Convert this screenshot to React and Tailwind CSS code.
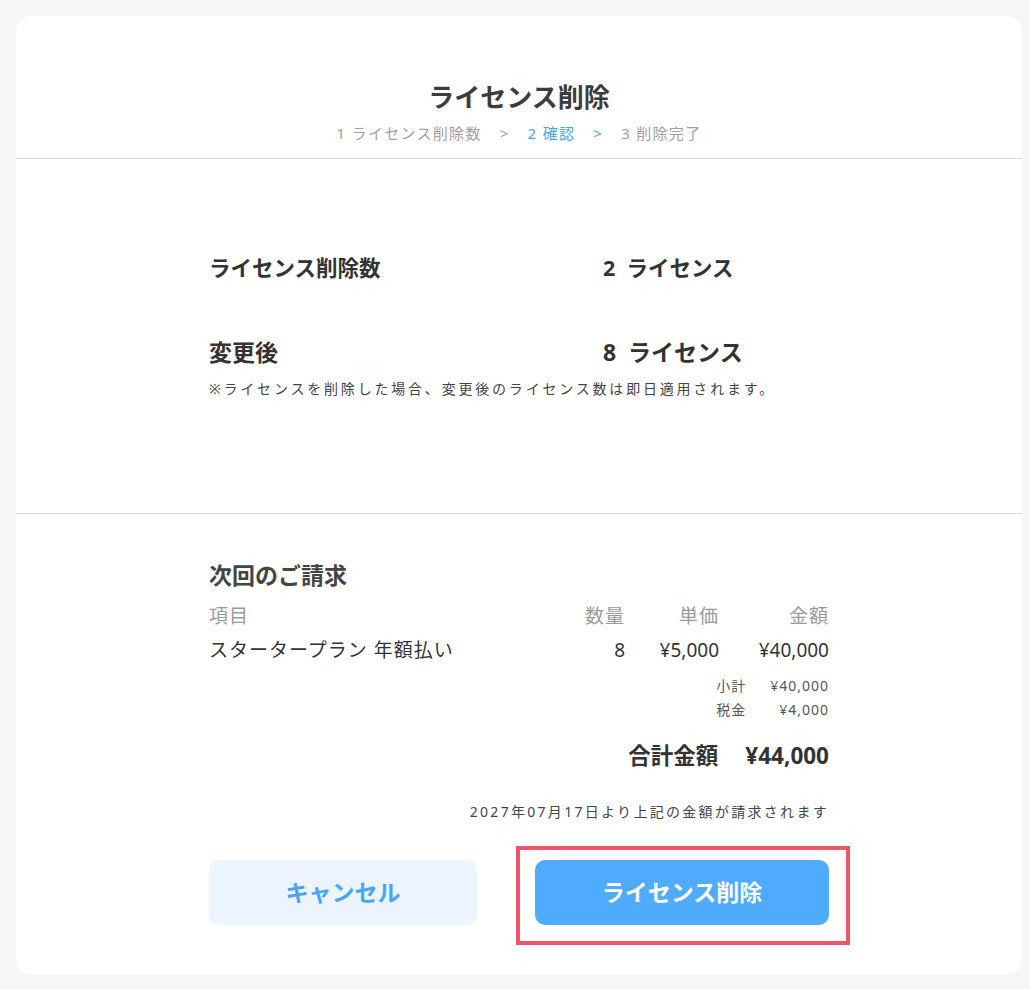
import React from "react";

const font = { fontFamily: '"Noto Sans", "Noto Sans CJK JP", sans-serif' };

export default function App() {
  return (
    <div className="min-h-[989px] bg-[#f7f6f4] pt-4 pr-2 pb-3 pl-4" style={font}>
      <div className="rounded-2xl bg-white">
        {/* header */}
        <div className="flex flex-col items-center border-b border-[#dcdcdc] pt-[63px] pb-[15px]">
          <h1 className="text-[26px] font-bold leading-[36px] text-[#3c3c3c]">ライセンス削除</h1>
          <div className="mt-2 flex items-center gap-[18px] text-[15px] leading-5 tracking-[1.3px] text-[#a0a0a0]">
            <span>1 ライセンス削除数</span>
            <span>&gt;</span>
            <span className="text-[#4aa0f8]">2 確認</span>
            <span className="text-[#4aa0f8]">&gt;</span>
            <span>3 削除完了</span>
          </div>
        </div>

        {/* license summary */}
        <div className="border-b border-[#dcdcdc] pt-[94px] pb-[114px]">
          <div className="mx-auto w-[620px] text-[#333]">
            <div className="flex text-[21.5px] font-bold leading-[30px]">
              <span className="w-[394px]">ライセンス削除数</span>
              <span>2&nbsp;&nbsp;ライセンス</span>
            </div>
            <div className="mt-[54px] flex text-[23px] font-bold leading-[30px]">
              <span className="w-[394px]">変更後</span>
              <span>8&nbsp;&nbsp;ライセンス</span>
            </div>
            <p className="mt-3 text-[14px] leading-5 tracking-[2.8px] text-[#444]">
              ※ライセンスを削除した場合、変更後のライセンス数は即日適用されます。
            </p>
          </div>
        </div>

        {/* billing */}
        <div className="pt-[46px] pb-[50px]">
          <div className="mx-auto w-[620px]">
            <h2 className="text-[23px] font-bold leading-[30px] text-[#444]">次回のご請求</h2>
            <div className="mt-[13px] grid grid-cols-[1fr_60px_94px_110px] text-[19px] leading-[26px] tracking-[1px] text-[#9a9a9a]">
              <span>項目</span>
              <span className="text-right">数量</span>
              <span className="text-right">単価</span>
              <span className="text-right">金額</span>
            </div>
            <div className="mt-2 grid grid-cols-[1fr_60px_94px_110px] text-[19px] leading-[26px] text-[#333]">
              <span className="tracking-[1px]">スタータープラン 年額払い</span>
              <span className="text-right">8</span>
              <span className="text-right">¥5,000</span>
              <span className="text-right">¥40,000</span>
            </div>
            <div className="mt-[13px] flex justify-end">
              <div className="grid grid-cols-[auto_auto] gap-x-6 gap-y-1 text-[14px] leading-5 tracking-[1px] text-[#555]">
                <span>小計</span>
                <span className="text-right">¥40,000</span>
                <span>税金</span>
                <span className="text-right">¥4,000</span>
              </div>
            </div>
            <div className="mt-[21px] flex justify-end gap-[27px] text-[22.5px] font-bold leading-[30px] text-[#333]">
              <span>合計金額</span>
              <span>¥44,000</span>
            </div>
            <p className="mt-[31px] text-right text-[14px] leading-5 tracking-[2.3px] text-[#444]">
              2027年07月17日より上記の金額が請求されます
            </p>
            <div className="mt-[38px] flex justify-between">
              <button className="h-[65px] w-[268px] rounded-[10px] bg-[#ebf4ff] text-[23px] font-bold text-[#4aa3f5]">
                キャンセル
              </button>
              <div className="relative">
                <span className="absolute -top-[14px] -right-[21px] -bottom-[20px] -left-[19px] border-4 border-[#f25468]" />
                <button className="relative h-[65px] w-[294px] rounded-[10px] bg-[#4eabfd] text-[23px] font-bold text-white">
                  ライセンス削除
                </button>
              </div>
            </div>
          </div>
        </div>
      </div>
    </div>
  );
}
